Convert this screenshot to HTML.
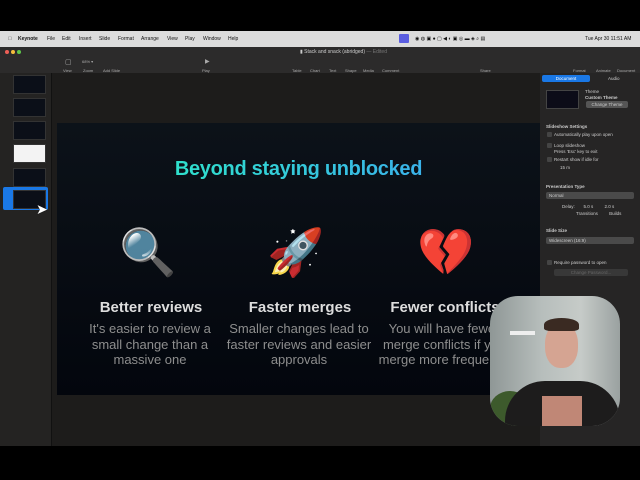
<!DOCTYPE html>
<html><head><style>
*{margin:0;padding:0;box-sizing:border-box}
body{width:640px;height:480px;background:#000;position:relative;overflow:hidden;font-family:"Liberation Sans",sans-serif}
.a{position:absolute}
.menu{top:31px;left:0;width:640px;height:16px;background:#dcdcdc;font-size:5px;color:#111}
.menu span{position:absolute;top:5px}
.tb{top:47px;left:0;width:640px;height:26px;background:#2c2b2b;color:#aaa;font-size:4px}
.tb span{position:absolute;top:21px}
.canvas{top:73px;left:52px;width:488px;height:373px;background:#1d1c1b}
.side{top:73px;left:0;width:52px;height:373px;background:#242322;border-right:1px solid #111}
.th{position:absolute;left:13px;width:33px;height:19px;background:#0b0f18;border:1px solid #333}
.slide{top:123px;left:57px;width:483px;height:272px;background:linear-gradient(#0c1219,#03060d)}
.h{position:absolute;color:#ddd;font-weight:bold;font-size:15px;text-align:center;width:140px}
.p{position:absolute;color:#8e8e8e;font-size:13px;line-height:15.5px;text-align:center;width:150px}
.emo{position:absolute;font-size:46px;font-family:"DejaVu Sans",sans-serif}
.rp{top:73px;left:540px;width:100px;height:373px;background:#262525;color:#ccc;font-size:4.5px}
.rp div{position:absolute}
.cb{width:5px;height:5px;background:#444;border-radius:1px}
</style></head><body>
<div class="a menu">
<span style="left:8px">&#63743;</span><span style="left:18px;font-weight:bold">Keynote</span><span style="left:47px">File</span><span style="left:62px">Edit</span><span style="left:79px">Insert</span><span style="left:99px">Slide</span><span style="left:118px">Format</span><span style="left:141px">Arrange</span><span style="left:167px">View</span><span style="left:185px">Play</span><span style="left:203px">Window</span><span style="left:228px">Help</span>
<div class="a" style="left:399px;top:3px;width:10px;height:9px;background:#5a5de0;border-radius:1px"></div>
<span style="left:415px">◉ ◍ ▣ ● ▢ ◀ ◐ ▣ ◎ ▬ ◈ ⌕ ▤</span>
<span style="left:585px">Tue Apr 30 11:51 AM</span>
</div>
<div class="a tb">
<div class="a" style="left:5px;top:3px;width:4px;height:4px;border-radius:2px;background:#ee5f57"></div>
<div class="a" style="left:11px;top:3px;width:4px;height:4px;border-radius:2px;background:#f4bd3b"></div>
<div class="a" style="left:17px;top:3px;width:4px;height:4px;border-radius:2px;background:#5ec74a"></div>
<div class="a" style="left:300px;top:2px;font-size:5px;color:#ccc">▮ Stack and snack (abridged) <span style="position:static;color:#777">— Edited</span></div>
<span style="left:63px">View</span><span style="left:83px">Zoom</span><span style="left:103px">Add Slide</span><span style="left:202px">Play</span><span style="left:292px">Table</span><span style="left:310px">Chart</span><span style="left:329px">Text</span><span style="left:345px">Shape</span><span style="left:363px">Media</span><span style="left:382px">Comment</span><span style="left:480px">Share</span><span style="left:573px">Format</span><span style="left:596px">Animate</span><span style="left:617px">Document</span>
<span style="left:65px;top:11px;font-size:7px">▢</span><span style="left:82px;top:12px">68% ▾</span><span style="left:205px;top:11px;font-size:6px">▶</span>
</div>
<div class="a canvas"></div>
<div class="a side">
<div class="th" style="top:2px"></div>
<div class="th" style="top:25px"></div>
<div class="th" style="top:48px"></div>
<div class="th" style="top:71px;background:#f3f3f3"></div>
<div class="th" style="top:95px"></div>
<div class="a" style="left:3px;top:114px;width:45px;height:23px;background:#1a78e6;border-radius:2px"></div>
<div class="th" style="top:117px"></div>
<div class="a" style="left:36px;top:128px;font-size:14px;color:#fff;text-shadow:0 0 1px #000">➤</div>
</div>
<div class="a slide">
<div class="a" style="left:0;top:35px;width:483px;text-align:center;font-size:20px;font-weight:bold;letter-spacing:-0.3px"><span style="background:linear-gradient(90deg,#2fe0cc,#3ab3ea);-webkit-background-clip:text;background-clip:text;color:transparent">Beyond staying unblocked</span></div>
<div class="emo" style="left:62px;top:102px">🔍</div>
<div class="emo" style="left:210px;top:102px">🚀</div>
<div class="emo" style="left:360px;top:102px">💔</div>
<div class="h" style="left:24px;top:176px">Better reviews</div>
<div class="h" style="left:173px;top:176px">Faster merges</div>
<div class="h" style="left:318px;top:176px">Fewer conflicts</div>
<div class="p" style="left:18px;top:198px">It's easier to review a small change than a massive one</div>
<div class="p" style="left:167px;top:198px">Smaller changes lead to faster reviews and easier approvals</div>
<div class="p" style="left:312px;top:198px">You will have fewer merge conflicts if you merge more frequently</div>
</div>
<div class="a rp">
<div style="left:2px;top:2px;width:48px;height:7px;background:#1a78e6;border-radius:2px;color:#fff;text-align:center;line-height:7px">Document</div>
<div style="left:68px;top:3px">Audio</div>
<div style="left:6px;top:17px;width:33px;height:19px;background:#0c0c18;border:1px solid #444"></div>
<div style="left:45px;top:16px">Theme</div>
<div style="left:45px;top:22px;font-weight:bold">Custom Theme</div>
<div style="left:46px;top:28px;width:42px;height:7px;background:#555;border-radius:2px;text-align:center;line-height:7px">Change Theme</div>
<div style="left:6px;top:51px;font-weight:bold">Slideshow Settings</div>
<div class="cb" style="left:7px;top:59px"></div><div style="left:14px;top:59px">Automatically play upon open</div>
<div class="cb" style="left:7px;top:70px"></div><div style="left:14px;top:70px">Loop slideshow</div><div style="left:14px;top:76px">Press 'Esc' key to exit</div>
<div class="cb" style="left:7px;top:84px"></div><div style="left:14px;top:84px">Restart show if idle for</div>
<div style="left:20px;top:92px">15 m</div>
<div style="left:6px;top:111px;font-weight:bold">Presentation Type</div>
<div style="left:6px;top:119px;width:88px;height:7px;background:#4a4a4a;border-radius:2px;padding-left:3px;line-height:7px">Normal</div>
<div style="left:22px;top:131px">Delay:&nbsp;&nbsp;&nbsp;&nbsp;&nbsp;&nbsp;&nbsp;5.0 s&nbsp;&nbsp;&nbsp;&nbsp;&nbsp;&nbsp;&nbsp;&nbsp;&nbsp;2.0 s</div>
<div style="left:36px;top:138px">Transitions&nbsp;&nbsp;&nbsp;&nbsp;&nbsp;&nbsp;&nbsp;&nbsp;&nbsp;Builds</div>
<div style="left:6px;top:155px;font-weight:bold">Slide Size</div>
<div style="left:6px;top:164px;width:88px;height:7px;background:#4a4a4a;border-radius:2px;padding-left:3px;line-height:7px">Widescreen (16:9)</div>
<div class="cb" style="left:7px;top:187px"></div><div style="left:14px;top:187px">Require password to open</div>
<div style="left:14px;top:196px;width:74px;height:7px;background:#383838;border-radius:2px;text-align:center;line-height:7px;color:#666">Change Password...</div>
</div>
<div class="a" style="left:490px;top:296px;width:130px;height:130px;border-radius:28px;overflow:hidden;background:linear-gradient(90deg,#8f9796,#b7bebc 40%,#c6cbc8 70%,#9aa1a0)">
<div class="a" style="left:20px;top:35px;width:25px;height:4px;background:#eee"></div>
<div class="a" style="left:0;top:95px;width:40px;height:35px;background:#3d5a2c;border-radius:50% 50% 0 0"></div>
<div class="a" style="left:15px;top:85px;width:115px;height:60px;background:#1d1c1c;border-radius:40px 40px 0 0"></div>
<div class="a" style="left:52px;top:100px;width:40px;height:40px;background:#c08776"></div>
<div class="a" style="left:55px;top:27px;width:33px;height:45px;background:#d5a492;border-radius:45%"></div>
<div class="a" style="left:54px;top:22px;width:35px;height:13px;background:#3a2a22;border-radius:50% 50% 20% 20%"></div>
</div>
</body></html>
